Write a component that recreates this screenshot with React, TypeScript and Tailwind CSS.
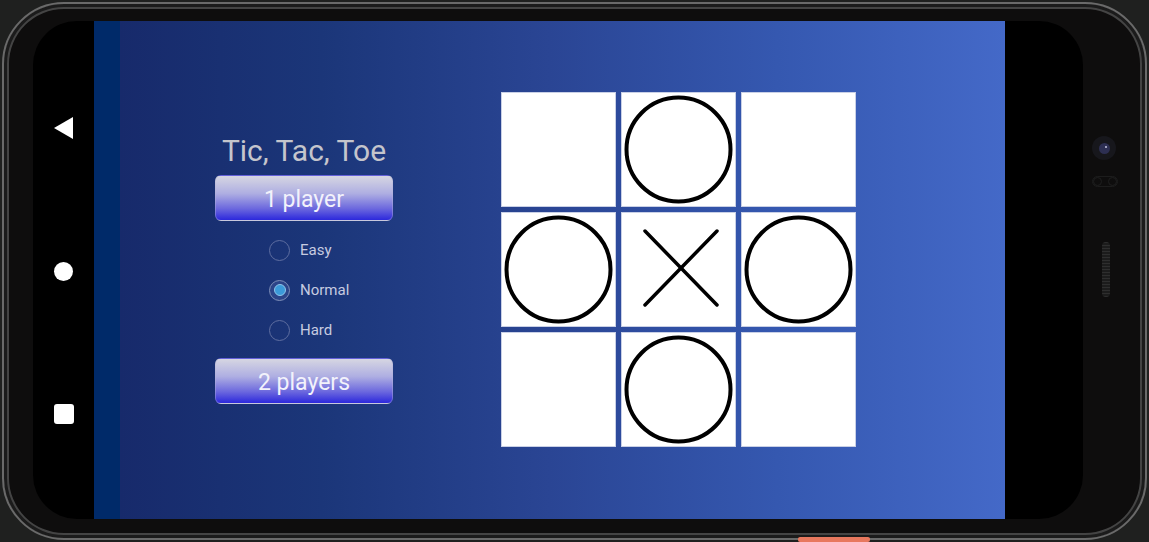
import React from 'react'

type Mark = 'O' | 'X' | null

const board: Mark[] = [null, 'O', null, 'O', 'X', 'O', null, 'O', null]

const levels = [
  { id: 'easy', label: 'Easy' },
  { id: 'normal', label: 'Normal' },
  { id: 'hard', label: 'Hard' },
]

function Cell({ mark }: { mark: Mark }) {
  return (
    <div className="w-[115px] h-[115px] bg-white border border-[#c9d0e6]">
      {mark && (
        <svg viewBox="0 0 113 113" className="w-full h-full">
          {mark === 'O' ? (
            <circle cx="56.5" cy="56.5" r="52" fill="none" stroke="#000" strokeWidth="4" />
          ) : (
            <g stroke="#000" strokeWidth="3.5" strokeLinecap="round">
              <line x1="23" y1="18" x2="95" y2="92" />
              <line x1="95" y1="18" x2="23" y2="92" />
            </g>
          )}
        </svg>
      )}
    </div>
  )
}

function GameButton({ label }: { label: string }) {
  return (
    <button className="w-[178px] h-[46px] rounded-[6px] border border-[#b4b4d6]/40 bg-[linear-gradient(to_bottom,#d6d6e2_0%,#aeaee2_40%,#6a66de_75%,#2c28dc_100%)] text-[23px] text-[#f2f2fb] leading-none pt-[2px]">
      {label}
    </button>
  )
}

function Radio({ label, checked }: { label: string; checked?: boolean }) {
  return (
    <div className="h-[40px] flex items-center gap-[10px] pl-[54px]">
      <span
        className={`w-[21px] h-[21px] rounded-full flex items-center justify-center border ${
          checked ? 'border-[#7f8fb8] bg-[#2c4488]' : 'border-[#5f6ea0]'
        }`}
      >
        {checked && <span className="w-[12px] h-[12px] rounded-full bg-[#3b9ad9] border border-[#8fc4ea]" />}
      </span>
      <span className="text-[15px] text-[#c6cbe0]">{label}</span>
    </div>
  )
}

export default function App() {
  return (
    <div
      className="w-[1149px] h-[542px] bg-[#1f201f] p-[2px] overflow-hidden"
      style={{ fontFamily: 'Roboto, "Liberation Sans", sans-serif' }}
    >
      {/* Phone body */}
      <div className="relative h-[538px] rounded-[62px] border-2 border-[#6a6a6a] bg-[#0e0d0d] shadow-[inset_0_0_0_3px_#1b1b1b,inset_0_0_0_5px_#444444] flex pt-[17px] pb-[19px] pl-[29px]">
        {/* Glass */}
        <div className="w-[1050px] h-full rounded-[44px] bg-black flex overflow-hidden">
          {/* Nav bar */}
          <div className="w-[61px] flex flex-col items-center justify-center gap-[123px]">
            <svg width="19" height="22" viewBox="0 0 19 22">
              <path d="M19 0 L19 22 L0 11 Z" fill="#fff" />
            </svg>
            <span className="w-[19px] h-[19px] rounded-full bg-white" />
            <span className="w-[20px] h-[20px] rounded-[3px] bg-white" />
          </div>

          {/* Screen */}
          <div className="w-[911px] h-full flex items-center pl-[121px] gap-[108px] bg-[linear-gradient(to_right,#002a69_0px,#002a69_26px,#172a6b_26px,#1b3679_25%,#2a4594_50%,#3558b0_75%,#4469c8_100%)]">
            <div className="w-[178px] flex flex-col items-stretch">
              <h1 className="text-[30px] leading-[30px] text-center text-[#c4c5cc] mb-[9px]">Tic, Tac, Toe</h1>
              <GameButton label="1 player" />
              <div className="flex flex-col mt-[9px] mb-[8px]">
                {levels.map(l => (
                  <Radio key={l.id} label={l.label} checked={l.id === 'normal'} />
                ))}
              </div>
              <GameButton label="2 players" />
            </div>

            <div className="grid grid-cols-3 gap-[5px] -mt-[1px]">
              {board.map((m, i) => (
                <Cell key={i} mark={m} />
              ))}
            </div>
          </div>

          <div className="flex-1" />
        </div>

        {/* Right frame: camera, sensor, speaker */}
        <div className="flex-1 flex flex-col pl-[9px] pt-[115px]">
          <div className="w-[24px] h-[24px] rounded-full bg-[#17171c] flex items-center justify-center">
            <div className="relative w-[11px] h-[11px] rounded-full bg-[#2d2f52]">
              <span className="absolute right-[3px] top-[3px] w-[2px] h-[2px] rounded-full bg-[#c8c8e0]" />
            </div>
          </div>
          <div className="mt-[16px] w-[26px] h-[11px] rounded-full border border-[#1c1c1c] flex">
            <span className="w-[9px] h-[9px] rounded-full border border-[#1e1e1e]" />
            <span className="ml-auto w-[9px] h-[9px] rounded-full border border-[#1e1e1e]" />
          </div>
          <div className="mt-[55px] ml-[10px] w-[8px] h-[55px] rounded-full bg-[repeating-linear-gradient(to_bottom,#2e2e2e_0px,#2e2e2e_1px,#1c1c1c_1px,#1c1c1c_3px)]" />
        </div>

        {/* Power button peeking at the bottom edge */}
        <span className="absolute left-[794px] bottom-[-4px] w-[72px] h-[5px] rounded-[2px] bg-[#e8785e]" />
      </div>
    </div>
  )
}
